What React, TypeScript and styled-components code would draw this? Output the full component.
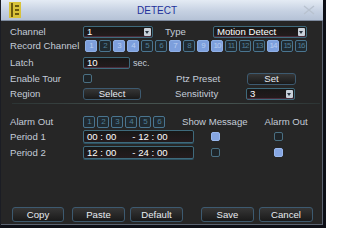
import styled, { createGlobalStyle } from "styled-components";

const Global = createGlobalStyle`
  html, body { margin: 0; padding: 0; background: #ffffff; }
  body { font-family: "Liberation Sans", Arial, sans-serif; }
`;

const recordOn = [1, 3, 4, 7, 9, 10, 14];

const periods = [
  { name: "Period 1", from: "00 : 00", to: "12 : 00", msg: true, out: false },
  { name: "Period 2", from: "12 : 00", to: "24 : 00", msg: false, out: true },
];

export default function App() {
  return (
    <>
      <Global />
      <Window>
        <TitleBar>
          <Logo>
            <svg width="12" height="16" viewBox="0 0 12 16">
              <rect x="0" y="0" width="12" height="16" fill="#d8c23a" />
              <rect x="2" y="1" width="2" height="14" fill="#6b5a10" />
              <rect x="6" y="3" width="4" height="2" fill="#6b5a10" />
              <rect x="6" y="7" width="4" height="2" fill="#6b5a10" />
              <rect x="6" y="11" width="4" height="2" fill="#6b5a10" />
            </svg>
          </Logo>
          <Title>DETECT</Title>
          <Close>
            <svg width="12" height="10" viewBox="0 0 12 10">
              <path d="M1 1 L11 9 M11 1 L1 9" stroke="#b8c2cf" strokeWidth="1.4" />
            </svg>
          </Close>
        </TitleBar>
        <Body>
          <Row $mt={0}>
            <Label>Channel</Label>
            <Select $w={70}>
              <span>1</span>
              <Arrow />
            </Select>
            <Label $pad={12} $w={48}>Type</Label>
            <Select $w={94}>
              <span>Motion Detect</span>
              <Arrow />
            </Select>
          </Row>
          <Row $mt={1}>
            <Label>Record Channel</Label>
            <Boxes $ml={2}>
              {Array.from({ length: 16 }, (_, i) => (
                <NumBox key={i} $on={recordOn.includes(i + 1)}>
                  {i + 1}
                </NumBox>
              ))}
            </Boxes>
          </Row>
          <Row $mt={4}>
            <Label>Latch</Label>
            <Input $w={47}>10</Input>
            <Unit>sec.</Unit>
          </Row>
          <Row $mt={3}>
            <Label>Enable Tour</Label>
            <Check />
            <Label $pad={84} $w={71}>Ptz Preset</Label>
            <Button $w={49} $h={12}>Set</Button>
          </Row>
          <Row $mt={2}>
            <Label>Region</Label>
            <Button $w={58} $h={12}>Select</Button>
            <Label $pad={34} $w={71}>Sensitivity</Label>
            <Select $w={49}>
              <span>3</span>
              <Arrow />
            </Select>
          </Row>
          <Divider />
          <Row $mt={11}>
            <Label>Alarm Out</Label>
            <Boxes>
              {Array.from({ length: 6 }, (_, i) => (
                <NumBox key={i} $on={false}>
                  {i + 1}
                </NumBox>
              ))}
            </Boxes>
            <Label $pad={17}>Show Message</Label>
            <Label $pad={17}>Alarm Out</Label>
          </Row>
          {periods.map((p, i) => (
            <Row key={p.name} $mt={i === 0 ? 2 : 3}>
              <Label>{p.name}</Label>
              <TimeBox>
                <span>{p.from}</span>
                <span>- {p.to}</span>
              </TimeBox>
              <CellCheck $pad={17}>
                <Check $on={p.msg} />
              </CellCheck>
              <CellCheck $pad={54}>
                <Check $on={p.out} />
              </CellCheck>
            </Row>
          ))}
          <Footer>
            <Group>
              <Button $w={52} $h={15}>Copy</Button>
              <Button $w={53} $h={15} $ml={8}>Paste</Button>
              <Button $w={53} $h={15} $ml={5}>Default</Button>
            </Group>
            <Group>
              <Button $w={53} $h={15}>Save</Button>
              <Button $w={54} $h={15} $ml={5}>Cancel</Button>
            </Group>
          </Footer>
        </Body>
      </Window>
    </>
  );
}

const Window = styled.div`
  width: 322px;
  height: 225px;
  margin-left: -1px;
  background: #262626;
  border-right: 3px solid #0d0f16;
  border-bottom: 3px solid #0d0f16;
  border-left: 2px solid #1b1d24;
  box-shadow: inset -1px -1px 0 #5a6270;
  display: flex;
  flex-direction: column;
`;

const TitleBar = styled.div`
  height: 20px;
  background: linear-gradient(#e4ebf4, #c6d1e2 55%, #b5c2d6);
  display: flex;
  align-items: center;
  border-bottom: 1px solid #7d8a9e;
`;

const Logo = styled.div`
  width: 12px;
  height: 16px;
  margin-left: 8px;
  display: flex;
`;

const Title = styled.div`
  flex: 1;
  text-align: center;
  font-size: 10px;
  color: #22309a;
  padding-right: 10px;
`;

const Close = styled.div`
  width: 12px;
  margin-right: 8px;
  display: flex;
`;

const Body = styled.div`
  flex: 1;
  padding: 4px 0 0 9px;
  display: flex;
  flex-direction: column;
`;

const Row = styled.div<{ $mt: number }>`
  display: flex;
  align-items: center;
  height: 13px;
  margin-top: ${(p) => p.$mt}px;
`;

const Label = styled.div<{ $w?: number; $pad?: number }>`
  width: ${(p) => (p.$w ? `${p.$w}px` : "auto")};
  min-width: ${(p) => (p.$pad === undefined ? "73px" : "0")};
  margin-left: ${(p) => p.$pad ?? 0}px;
  flex: none;
  font-size: 9.6px;
  color: #c4ccd8;
  white-space: nowrap;
`;

const Field = styled.div`
  height: 12px;
  box-sizing: border-box;
  border: 1px solid #3f6a7c;
  border-radius: 2px;
  background: linear-gradient(#181818, #241b1d);
  box-shadow: inset 0 -1px 0 #4a2c3c;
  font-size: 9.6px;
  color: #ffffff;
  padding-left: 3px;
  flex: none;
`;

const Select = styled(Field)<{ $w: number }>`
  width: ${(p) => p.$w}px;
  display: flex;
  align-items: center;
  justify-content: space-between;
  padding-right: 1px;
`;

const Arrow = styled.div`
  width: 7px;
  height: 8px;
  border-radius: 1px;
  background: #c9d1da;
  position: relative;

  &::after {
    content: "";
    position: absolute;
    left: 1px;
    top: 3px;
    border-left: 2.5px solid transparent;
    border-right: 2.5px solid transparent;
    border-top: 3px solid #2a3440;
  }
`;

const Input = styled(Field)<{ $w: number }>`
  width: ${(p) => p.$w}px;
  line-height: 10px;
`;

const Unit = styled.div`
  font-size: 9px;
  color: #c4ccd8;
  margin-left: 3px;
`;

const Boxes = styled.div<{ $ml?: number }>`
  display: flex;
  gap: 2px;
  margin-left: ${(p) => p.$ml ?? 0}px;
`;

const NumBox = styled.div<{ $on: boolean }>`
  width: 12px;
  height: 12px;
  box-sizing: border-box;
  border: 1px solid ${(p) => (p.$on ? "#8fb0e6" : "#4a7590")};
  border-radius: 2px;
  background: ${(p) => (p.$on ? "#7d9fdc" : "#202a30")};
  color: ${(p) => (p.$on ? "#b8cdf0" : "#4f7e98")};
  font-size: 8px;
  line-height: 10px;
  text-align: center;
  letter-spacing: -1px;
  overflow: hidden;
`;

const Check = styled.div<{ $on?: boolean }>`
  width: 9px;
  height: 9px;
  box-sizing: border-box;
  border: 1px solid ${(p) => (p.$on ? "#9ab8ee" : "#4a6f82")};
  border-radius: 2px;
  background: ${(p) => (p.$on ? "#86a6e2" : "#1e2428")};
  flex: none;
`;

const Button = styled.div<{ $w: number; $h: number; $ml?: number }>`
  width: ${(p) => p.$w}px;
  height: ${(p) => p.$h}px;
  margin-left: ${(p) => p.$ml ?? 0}px;
  box-sizing: border-box;
  border: 1px solid #3d5a70;
  border-radius: 3px;
  background: linear-gradient(#363636, #1a1a1a);
  font-size: 9.6px;
  color: #e8ecf2;
  display: flex;
  align-items: center;
  justify-content: center;
  flex: none;
`;

const Divider = styled.div`
  height: 1px;
  margin: 3px 3px 0 2px;
  background: linear-gradient(90deg, #2c3434, #45524f 40%, #45524f 70%, #2c3434);
`;

const TimeBox = styled(Field)`
  width: 111px;
  height: 13px;
  display: flex;
  align-items: center;
  gap: 16px;
  box-shadow: 0 1px 0 #2d5060;
`;

const CellCheck = styled.div<{ $pad: number }>`
  margin-left: ${(p) => p.$pad}px;
  display: flex;
`;

const Footer = styled.div`
  margin-top: auto;
  margin-bottom: 3px;
  display: flex;
  justify-content: space-between;
  padding: 0 10px 0 2px;
`;

const Group = styled.div`
  display: flex;
`;
